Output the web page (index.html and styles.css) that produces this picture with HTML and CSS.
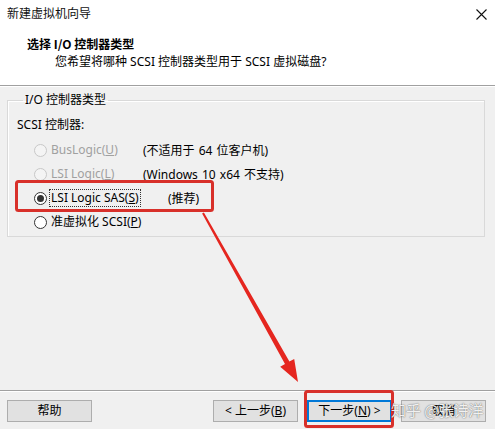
FILE: index.html
```html
<!DOCTYPE html>
<html lang="zh-CN">
<head>
<meta charset="utf-8">
<title>新建虚拟机向导</title>
<link rel="stylesheet" href="styles.css">
</head>
<body>
<div class="window">
  <div class="top">
    <div class="titlebar">
      <span class="title">新建虚拟机向导</span>
      <svg class="close" width="11" height="11" viewBox="0 0 11 11"><path d="M0.5 0.5 L10.5 10.5 M10.5 0.5 L0.5 10.5" stroke="#111" stroke-width="1.1" fill="none"/></svg>
    </div>
    <div class="header">
      <div class="h1">选择 I/O 控制器类型</div>
      <div class="h2">您希望将哪种 SCSI 控制器类型用于 SCSI 虚拟磁盘?</div>
    </div>
  </div>
  <div class="sep"></div>
  <div class="body">
    <fieldset class="group">
      <legend>I/O 控制器类型</legend>
      <div class="caption">SCSI 控制器:</div>
      <div class="row disabled">
        <span class="opt"><span class="radio"></span><span class="lbl">BusLogic(<u>U</u>)</span></span>
        <span class="note">(不适用于 64 位客户机)</span>
      </div>
      <div class="row disabled">
        <span class="opt"><span class="radio"></span><span class="lbl">LSI Logic(<u>L</u>)</span></span>
        <span class="note">(Windows 10 x64 不支持)</span>
      </div>
      <div class="row">
        <span class="opt"><span class="radio checked"></span><span class="lbl focus">LSI Logic SAS(<u>S</u>)</span></span>
        <span class="note rec">(推荐)</span>
      </div>
      <div class="row">
        <span class="opt"><span class="radio"></span><span class="lbl">准虚拟化 SCSI(<u>P</u>)</span></span>
      </div>
    </fieldset>
  </div>
  <div class="footer">
    <button class="btn">帮助</button>
    <div class="btn-group">
      <button class="btn">&lt; 上一步(<u>B</u>)</button>
      <button class="btn default">下一步(<u>N</u>) &gt;</button>
      <button class="btn">取消</button>
    </div>
  </div>
  <svg class="overlay" width="495" height="429" viewBox="0 0 495 429">
    <rect x="16.5" y="181.5" width="196" height="29" rx="2" fill="none" stroke="#d8302a" stroke-width="3"/>
    <rect x="305.5" y="391.5" width="87" height="35" rx="2" fill="none" stroke="#d8302a" stroke-width="3"/>
    <polygon points="203.9,212.5 289.4,361.6 294.2,358.9 298,382 280.2,366.7 285.0,364.0 202.1,213.5" fill="#e5261f"/>
  </svg>
  <div class="watermark">知乎 @张诗洋</div>
</div>
</body>
</html>
```
FILE: styles.css
```css
* { box-sizing: border-box; }
html, body { margin: 0; padding: 0; }
body {
  width: 495px;
  height: 429px;
  overflow: hidden;
  background: #f0f0f0;
  font-family: "Noto Sans", "Noto Sans CJK SC", sans-serif;
  font-size: 12px;
  color: #000;
}
.window {
  position: relative;
  width: 495px;
  height: 429px;
  display: flex;
  flex-direction: column;
  background: #f0f0f0;
}
.top { background: #fff; }
.titlebar {
  height: 28px;
  display: flex;
  align-items: center;
  justify-content: space-between;
  padding: 0 8px 0 7px;
}
.title { font-size: 12px; line-height: 16px; color: #111; }
.header {
  padding: 7px 0 14px 0;
}
.h1 {
  font-weight: bold;
  line-height: 18px;
  padding-left: 27px;
  font-family: "Noto Sans CJK SC", sans-serif;
}
.h2 {
  line-height: 18px;
  padding-left: 55px;
}
.sep {
  height: 2px;
  border-top: 1px solid #a0a0a0;
  border-bottom: 1px solid #fff;
}
.body {
  flex: 1;
  padding: 6px 10px 0 7px;
}
.group {
  margin: 0;
  padding: 0 0 2px 9px;
  border: 1px solid #d9d9d9;
  box-shadow: inset 1px 1px 0 #fff;
  height: 144px;
}
.group legend {
  padding: 0 2px;
  margin-left: 6px;
  line-height: 14px;
  font-size: 12px;
}
.caption {
  line-height: 18px;
  margin-top: 9px;
  margin-bottom: 4px;
}
.row {
  height: 24px;
  display: flex;
  align-items: center;
}
.opt {
  width: 126px;
  display: flex;
  align-items: center;
  padding-left: 17px;
}
.radio {
  width: 13px;
  height: 13px;
  border-radius: 50%;
  border: 1px solid #333;
  background: #fff;
  display: flex;
  align-items: center;
  justify-content: center;
  flex: none;
}
.radio.checked::after {
  content: "";
  width: 7px;
  height: 7px;
  border-radius: 50%;
  background: #333;
}
.lbl {
  margin-left: 3px;
  white-space: nowrap;
  line-height: 16px;
  padding: 0 1px;
}
.lbl.focus { outline: 1px dotted #333; outline-offset: 0; }
.disabled .radio { border-color: #c8c8c8; background: #f4f4f4; }
.disabled .lbl { color: #a0a0a0; }
.note { white-space: nowrap; word-spacing: 1px; }
.note.rec { margin-left: 25px; }
.footer {
  border-top: 1px solid #a0a0a0;
  box-shadow: inset 0 1px 0 #fff;
  height: 39px;
  padding: 9px 9px 0 7px;
  display: flex;
  justify-content: space-between;
  align-items: flex-start;
}
.btn-group { display: flex; gap: 9px; }
.btn {
  width: 85px;
  height: 22px;
  background: #e1e1e1;
  border: 1px solid #adadad;
  font-family: "Noto Sans", "Noto Sans CJK SC", sans-serif;
  font-size: 12px;
  color: #000;
  padding: 0;
  line-height: 18px;
}
.btn.default { border: 2px solid #0078d7; }
.overlay {
  position: absolute;
  left: 0;
  top: 0;
  pointer-events: none;
}
.watermark {
  position: absolute;
  left: 391px;
  top: 400px;
  font-family: "Noto Sans CJK SC", sans-serif;
  font-size: 15px;
  line-height: 20px;
  color: rgba(255, 255, 255, 0.92);
  text-shadow: 0 0 1px rgba(0, 0, 0, 0.55), 0 0 2px rgba(0, 0, 0, 0.25);
  pointer-events: none;
}
```
